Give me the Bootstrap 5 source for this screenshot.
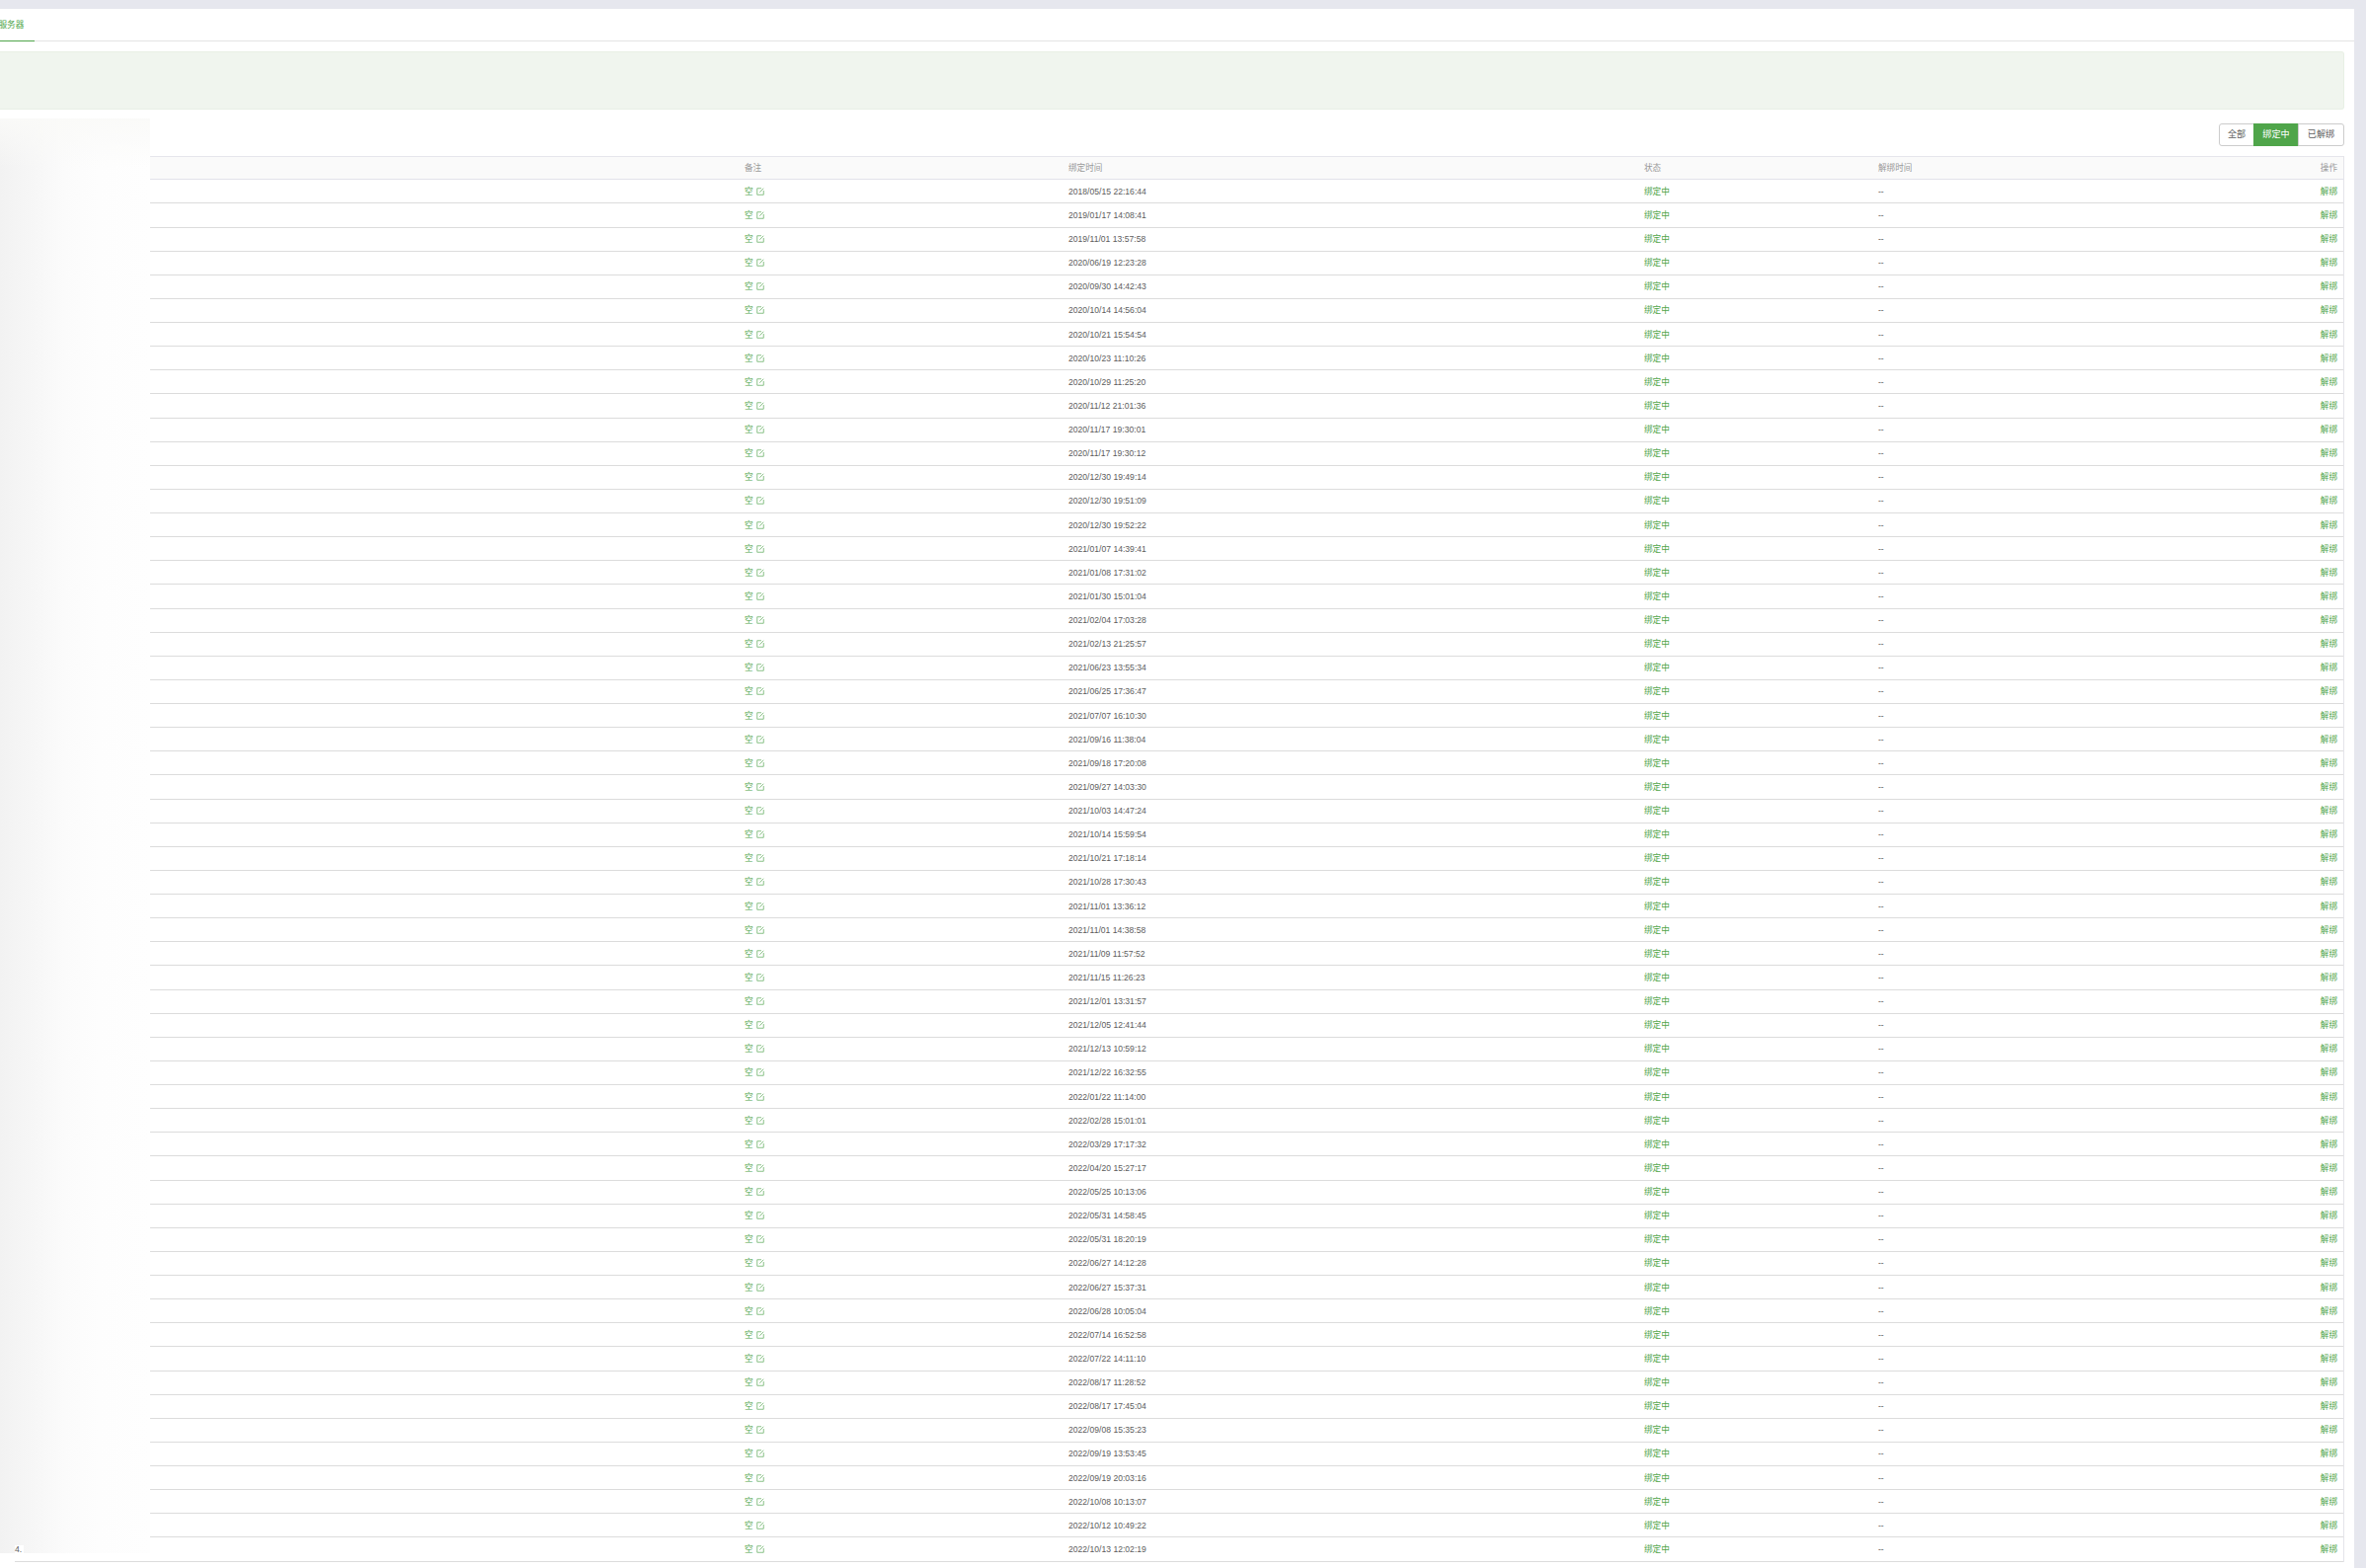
<!DOCTYPE html>
<html lang="zh-CN">
<head>
<meta charset="utf-8">
<title>绑定服务器</title>
<link href="https://cdn.jsdelivr.net/npm/bootstrap@5.3.0/dist/css/bootstrap.min.css" rel="stylesheet">
<style>
html,body{height:100%;overflow:hidden}
body{background:#e6e7ee;padding:9px 12px 0 0;font-family:"Liberation Sans","Noto Sans CJK SC",sans-serif;font-size:8.6px;color:#5c5c5c}
.panel-box{background:#fff;height:1579px;padding:0 10px 0 15px;position:relative;overflow:hidden}
.tab-bar{height:33px;margin:0 -10px 0 -15px;border-bottom:1.5px solid #e4e4e4}
.tab-cur{display:block;width:35px;height:33px;padding:11px 0 0 0;margin-left:0;color:#4fa54a;border-bottom:1.5px solid #4fa54a;white-space:nowrap;text-indent:-1.5px;line-height:11px;overflow:hidden}
.tip-box{height:59px;margin:10px 0 14px -15px;background:#f0f5ee;border:1px solid #e8f0e5;border-left:0;border-radius:0 3px 3px 0;padding:0}
.filter-row{height:23px;margin-bottom:10px}
.filter-row .btn{font-size:9.1px;line-height:21px;padding:0;height:23px;color:#5c5c5c;background:#fff;border:1px solid #ccc;border-radius:3px;font-family:inherit}
.filter-row .btn:nth-child(1){width:36px}
.filter-row .btn:nth-child(2){width:46px;background:#4fa54a;border-color:#4fa54a;color:#fff}
.filter-row .btn:nth-child(3){width:47px}
.data-tb{table-layout:fixed;width:2359px;margin:0;border-collapse:separate;border-spacing:0;font-size:8.6px;--bs-table-color:#5c5c5c;--bs-table-bg:transparent;color:#5c5c5c;border-right:1px solid #e4e4ea}
.data-tb th{height:24.3px;padding:0 7px;font-weight:400;color:#999;background:#fafafa;border-top:1px solid #e6e6ec;border-bottom:1px solid #e2e2ea;box-shadow:none;line-height:10px;vertical-align:middle}
.data-tb td{height:24.13px;padding:0 7px;border-bottom:1px solid #dcdcdc;box-shadow:none;vertical-align:middle;line-height:10px;background:transparent}
.data-tb tr>:last-child{padding-right:6px}
.g-txt{color:#4fa54a}
.edit-ic{width:8px;height:8px;margin-left:3px;vertical-align:-1px}
.blur-cover{position:absolute;left:0;top:111px;width:152px;height:1453px;background:linear-gradient(to bottom,rgba(250,250,248,.9) 0,rgba(255,255,255,0) 50px),linear-gradient(to right,#f2f2f2 0,#f6f6f6 30px,#fbfbfb 65px,#fdfdfd 100px,#fefefe 152px);display:flex;align-items:flex-end;padding-left:15px}
.blur-tag{background:#fff;height:8px;line-height:8px;width:9px;color:#5c5c5c;font-size:8.6px}
</style>
</head>
<body>
<div class="panel-box">
  <div class="tab-bar"><span class="tab-cur">服务器</span></div>
  <div class="alert tip-box" role="alert"></div>
  <div class="filter-row d-flex justify-content-end">
    <div class="btn-group" role="group">
      <button type="button" class="btn">全部</button>
      <button type="button" class="btn">绑定中</button>
      <button type="button" class="btn">已解绑</button>
    </div>
  </div>
  <table class="table data-tb">
    <colgroup><col style="width:732px"><col style="width:328px"><col style="width:583px"><col style="width:237px"><col style="width:300px"><col></colgroup>
    <thead><tr><th></th><th>备注</th><th>绑定时间</th><th>状态</th><th>解绑时间</th><th class="text-end">操作</th></tr></thead>
    <tbody id="rows"></tbody>
  </table>
  <div class="blur-cover"><span class="blur-tag">4.</span></div>
</div>
<script>
var times=["2018/05/15 22:16:44","2019/01/17 14:08:41","2019/11/01 13:57:58","2020/06/19 12:23:28","2020/09/30 14:42:43","2020/10/14 14:56:04","2020/10/21 15:54:54","2020/10/23 11:10:26","2020/10/29 11:25:20","2020/11/12 21:01:36","2020/11/17 19:30:01","2020/11/17 19:30:12","2020/12/30 19:49:14","2020/12/30 19:51:09","2020/12/30 19:52:22","2021/01/07 14:39:41","2021/01/08 17:31:02","2021/01/30 15:01:04","2021/02/04 17:03:28","2021/02/13 21:25:57","2021/06/23 13:55:34","2021/06/25 17:36:47","2021/07/07 16:10:30","2021/09/16 11:38:04","2021/09/18 17:20:08","2021/09/27 14:03:30","2021/10/03 14:47:24","2021/10/14 15:59:54","2021/10/21 17:18:14","2021/10/28 17:30:43","2021/11/01 13:36:12","2021/11/01 14:38:58","2021/11/09 11:57:52","2021/11/15 11:26:23","2021/12/01 13:31:57","2021/12/05 12:41:44","2021/12/13 10:59:12","2021/12/22 16:32:55","2022/01/22 11:14:00","2022/02/28 15:01:01","2022/03/29 17:17:32","2022/04/20 15:27:17","2022/05/25 10:13:06","2022/05/31 14:58:45","2022/05/31 18:20:19","2022/06/27 14:12:28","2022/06/27 15:37:31","2022/06/28 10:05:04","2022/07/14 16:52:58","2022/07/22 14:11:10","2022/08/17 11:28:52","2022/08/17 17:45:04","2022/09/08 15:35:23","2022/09/19 13:53:45","2022/09/19 20:03:16","2022/10/08 10:13:07","2022/10/12 10:49:22","2022/10/13 12:02:19"];
var ic='<svg class="edit-ic" viewBox="0 0 16 16" fill="none" stroke="#6db269" stroke-width="1.6"><path d="M10 1.500H1.500V14.500H14.500V6"/><path d="M6.500 9.500 14.500 1.500"/></svg>';
document.getElementById('rows').innerHTML=times.map(function(t){return '<tr><td></td><td class="g-txt">空'+ic+'</td><td>'+t+'</td><td class="g-txt">绑定中</td><td>--</td><td class="text-end g-txt">解绑</td></tr>';}).join('');
</script>
<script src="https://cdn.jsdelivr.net/npm/bootstrap@5.3.0/dist/js/bootstrap.bundle.min.js"></script>
</body>
</html>
